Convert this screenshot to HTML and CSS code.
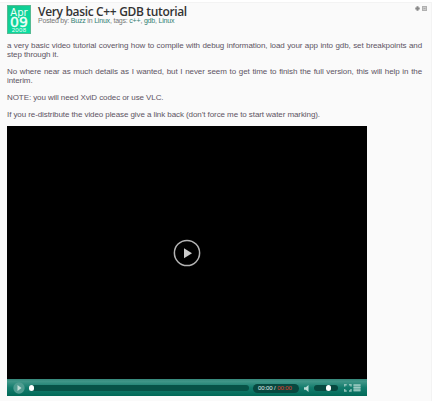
FILE: index.html
```
<!DOCTYPE html>
<html lang="en">
<head>
<meta charset="utf-8">
<title>Very basic C++ GDB tutorial</title>
<link rel="stylesheet" href="styles.css">
</head>
<body>
<article class="post">
  <header class="head">
    <div class="date"><span class="month">Apr</span><span class="day">09</span><span class="year">2008</span></div>
    <div class="titles">
      <h1><span>Very basic C++ GDB tutorial</span></h1>
      <p class="meta">Posted by: <a>Buzz</a> in <a>Linux</a>, tags: <a>c++</a>, <a>gdb</a>, <a>Linux</a></p>
    </div>
    <svg class="tools" width="12" height="6" viewBox="0 0 12 6"><path d="M2.5 .3v4.4M.3 2.5h4.4" stroke="#888" stroke-width="2"/><rect x="7.5" y=".5" width="4" height="4" fill="#ccc" stroke="#b0b0b0"/><path d="M8.5 2.5h2" stroke="#aaa"/></svg>
  </header>
  <div class="text">
    <p>a very basic video tutorial covering how to compile with debug information, load your app into gdb, set breakpoints and step through it.</p>
    <p>No where near as much details as I wanted, but I never seem to get time to finish the full version, this will help in the interim.</p>
    <p>NOTE: you will need XviD codec or use VLC.</p>
    <p>If you re-distribute the video please give a link back (don’t force me to start water marking).</p>
  </div>
  <div class="player">
    <div class="screen">
      <svg width="28" height="28" viewBox="0 0 28 28"><circle cx="14" cy="14" r="12.6" fill="none" stroke="#b4b4b4" stroke-width="1.5"/><path d="M11 9.2v10l8-5z" fill="#ccc"/></svg>
    </div>
    <div class="bar">
      <svg class="play" width="12" height="12" viewBox="0 0 12 12"><circle cx="6" cy="6" r="5.7" fill="#4f9c90"/><path d="M4.5 3v6l4-3z" fill="#c2ddd8"/></svg>
      <div class="seek"><i class="knob"></i></div>
      <div class="time">00:00 / <b>00:00</b></div>
      <svg class="speaker" width="5" height="7" viewBox="0 0 5 7"><path d="M0 2.2h1.8L4.5 0v7L1.8 4.8H0z" fill="#b9dbd5"/></svg>
      <div class="volume"><i class="knob"></i></div>
      <svg class="modes" width="17" height="8" viewBox="0 0 17 8"><path d="M.7 2.6V.7h2M5 .7h2v1.9M7 5v2H5M2.7 7h-2V5" fill="none" stroke="#8fc2b9" stroke-width="1.4"/><rect x="9.5" width="7" height="7.6" fill="#65aa9f"/><path d="M9.5 1.2h7M9.5 3.7h7M9.5 6.2h7" stroke="#9ccbc2" stroke-width="1.3"/></svg>
    </div>
  </div>
</article>
</body>
</html>
```
FILE: styles.css
```
* { box-sizing: border-box; }
body { margin: 0; background: #fff; font-family: "Liberation Sans", Arial, sans-serif; }
.post { width: 432px; height: 399px; margin-top: 2px; padding: 3px 9px 0 7px; background: #fafafa; border-top: 1px solid #f3f3f3; border-right: 1px solid #f3f3f3; }
.head { display: flex; height: 29px; }
.date { display: flex; flex-direction: column; align-items: center; width: 24px; height: 29px; margin-top: -1px; border: 1px solid #55ba92; background: linear-gradient(135deg, #14c58c, #08e2a6); color: #effff9; font-family: "DejaVu Sans", sans-serif; overflow: hidden; }
.date span { display: block; flex: none; }
.month { font-size: 10px; line-height: 9px; margin-top: 2px; }
.day { font-size: 14px; line-height: 11px; -webkit-text-stroke: .4px #effff9; }
.year { font: 6px/5px "Liberation Sans", sans-serif; letter-spacing: .3px; }
.titles { flex: 1; margin-left: 7px; }
h1 { margin: -1px 0 0; font: 600 12px/13px "Open Sans", sans-serif; letter-spacing: -.34px; color: #333; white-space: nowrap; }
.meta { margin: -1px 0 0; font-size: 7px; line-height: 8px; letter-spacing: -.2px; color: #777; white-space: nowrap; }
.meta a { color: #317d72; }
.tools { margin-top: 0; margin-right: -5px; }
.text { padding-top: 5.6px; font-size: 8px; line-height: 9.5px; letter-spacing: -.085px; color: #5d5463; text-align: justify; }
.text p { margin: 0 0 7.3px; }
.text p:last-child { margin-bottom: 6.7px; }
.player { width: 360px; }
.screen { display: flex; align-items: center; justify-content: center; height: 253px; background: #000; }
.bar { display: flex; align-items: center; height: 17px; padding: 1px 6px 0; background: linear-gradient(#35877b 0, #3f9587 15%, #147c6d 50%, #006957 100%); }
.seek { width: 220px; height: 6px; margin-left: 4px; border-radius: 3px; background: #075247; display: flex; align-items: center; }
.knob { width: 5px; height: 6px; border-radius: 3px; background: #fff; }
.time { width: 46px; height: 9px; margin-left: 4px; padding-left: 5px; border-radius: 5px; background: #07483f; color: #e5eeec; font-size: 6px; line-height: 9px; letter-spacing: -.1px; white-space: nowrap; }
.time b { font-weight: 400; color: #e03a28; }
.speaker { margin-left: 5px; }
.volume { display: flex; align-items: center; width: 24px; height: 6px; margin-left: 5px; padding-left: 12px; border-radius: 3px; background: #07483f; }
.modes { margin-left: 6px; }
```
